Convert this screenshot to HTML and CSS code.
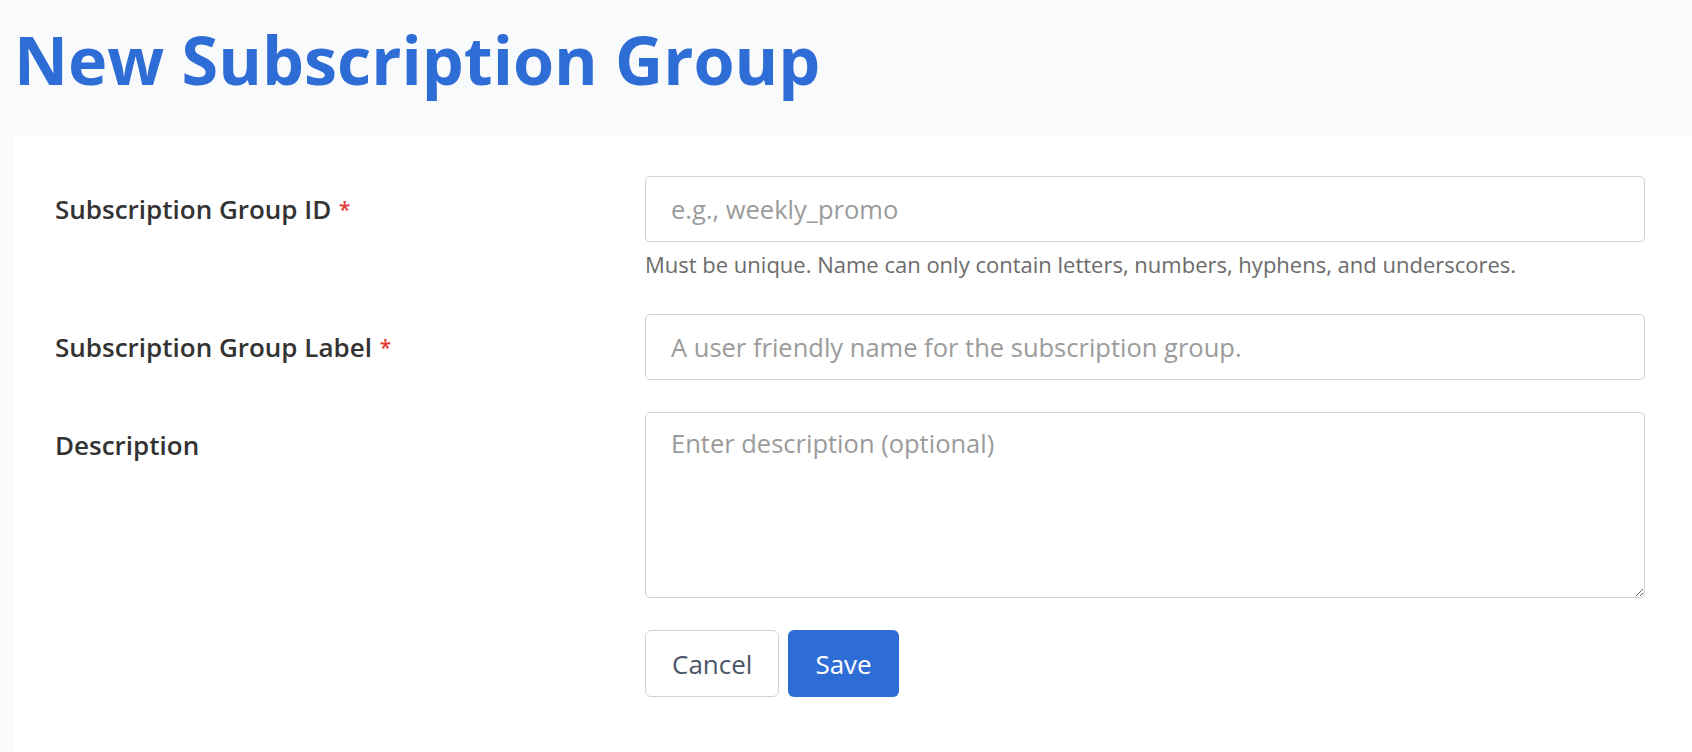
FILE: index.html
```html
<!DOCTYPE html>
<html lang="en">
<head>
  <meta charset="UTF-8" />
  <title>New Subscription Group</title>
  <link rel="stylesheet" href="styles.css">
</head>
<body>
  <header class="page-header">
    <h1 class="page-title">New Subscription Group</h1>
  </header>

  <main class="card">
    <form class="form">
      <div class="form-row">
        <label class="form-label" for="group-id">Subscription Group ID <span class="required">*</span></label>
        <div class="form-field">
          <input class="form-input" id="group-id" type="text" placeholder="e.g., weekly_promo" />
          <p class="form-help">Must be unique. Name can only contain letters, numbers, hyphens, and underscores.</p>
        </div>
      </div>

      <div class="form-row">
        <label class="form-label" for="group-label">Subscription Group Label <span class="required">*</span></label>
        <div class="form-field">
          <input class="form-input" id="group-label" type="text" placeholder="A user friendly name for the subscription group." />
        </div>
      </div>

      <div class="form-row">
        <label class="form-label" for="group-desc">Description</label>
        <div class="form-field">
          <textarea class="form-textarea" id="group-desc" placeholder="Enter description (optional)"></textarea>
        </div>
      </div>

      <div class="form-row">
        <div></div>
        <div class="form-actions">
          <button type="button" class="btn btn-cancel">Cancel</button>
          <button type="submit" class="btn btn-save">Save</button>
        </div>
      </div>
    </form>
  </main>
</body>
</html>
```

FILE: styles.css
```css
* {
  box-sizing: border-box;
}

body {
  margin: 0;
  background-color: #f9fafc;
  font-family: 'Open Sans', 'Lato', sans-serif;
  color: #333333;
}

/* Cabecalho */
.page-header {
  height: 135px;
  padding: 20px 0 0 14px;
}

.page-title {
  margin: 0;
  font-size: 66.5px;
  line-height: 1.2;
  font-weight: 700;
  color: #2f6dd6;
}

/* Cartao do formulario */
.card {
  margin-left: 13px;
  min-height: 617px;
  background-color: #ffffff;
  padding: 41px 47px 0 42px;
}

.form-row {
  display: grid;
  grid-template-columns: 590px 1fr;
  margin-bottom: 32px;
}

.form-label {
  padding-top: 18px;
  font-size: 26px;
  line-height: 1.2;
  font-weight: 600;
  color: #333333;
}

.required {
  position: relative;
  top: -2px;
  margin-left: 1px;
  font-size: 0.8em;
  color: #e53935;
  font-weight: 600;
}

.form-input,
.form-textarea {
  display: block;
  width: 100%;
  font-family: inherit;
  font-size: 25.5px;
  color: #333333;
  background: #ffffff;
  border: 1.5px solid #ccd2db;
  border-radius: 5px;
  padding: 0 25px;
}

.form-input {
  height: 66px;
}

.form-textarea {
  height: 186px;
  padding-top: 11px;
  line-height: 1.5;
  resize: vertical;
}

.form-input::placeholder,
.form-textarea::placeholder {
  color: #9b9b9b;
}

.form-help {
  margin: 9px 0 5px;
  font-size: 22px;
  line-height: 1.2;
  color: #6b6b6b;
}

.form-actions {
  display: flex;
  gap: 9px;
}

.btn {
  height: 67px;
  padding: 0 26px;
  font-family: inherit;
  font-size: 26px;
  border-radius: 6px;
  cursor: pointer;
}

.btn-cancel {
  background: #ffffff;
  color: #4a5568;
  border: 1.5px solid #ccd2db;
}

.btn-save {
  background: #2f6dd6;
  color: #ffffff;
  border: none;
  padding: 0 27px;
}
```
